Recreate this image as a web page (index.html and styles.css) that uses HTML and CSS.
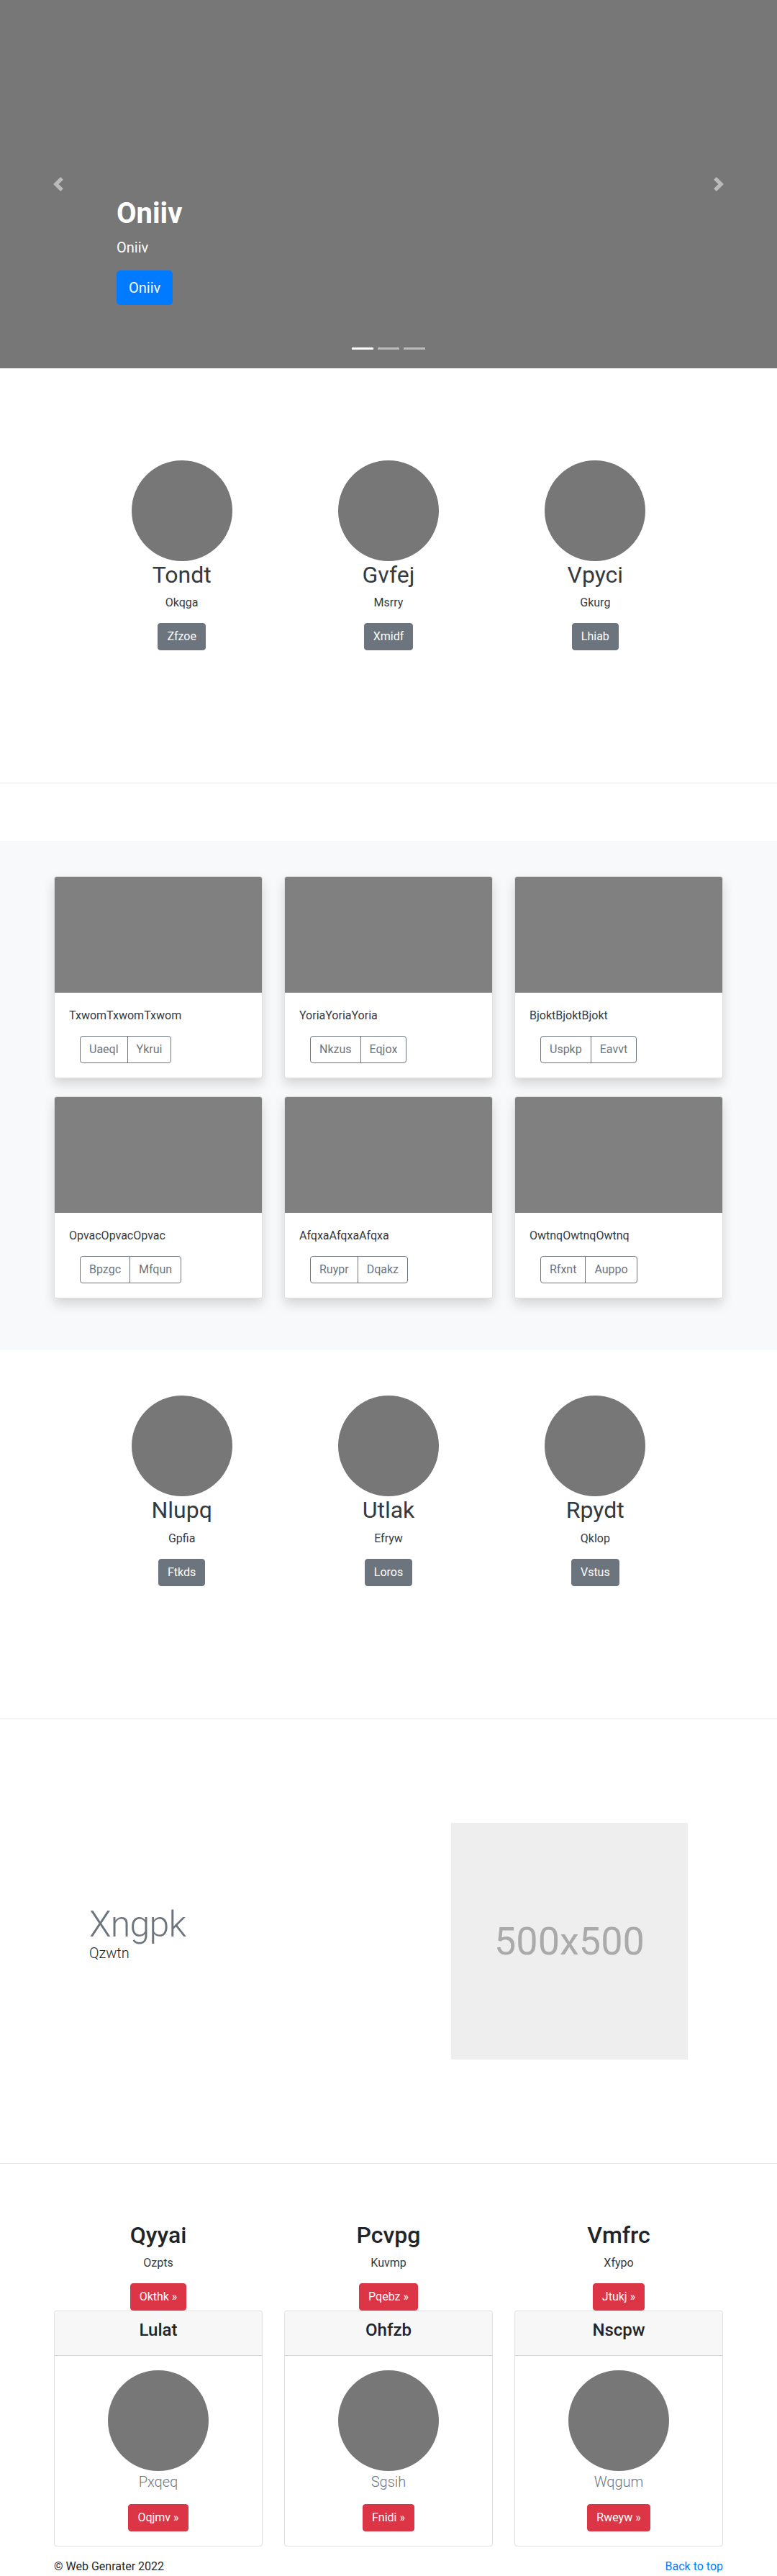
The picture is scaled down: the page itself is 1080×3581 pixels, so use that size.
FILE: index.html
```html
<!DOCTYPE html>
<html lang="en">
<head>
<meta charset="utf-8">
<title>Web Genrater</title>
<link rel="stylesheet" href="styles.css">
</head>
<body>
<div class="carousel">
  <ol class="indicators">
    <li class="active"></li>
    <li></li>
    <li></li>
  </ol>
  <div class="caption">
    <h1>Oniiv</h1>
    <p>Oniiv</p>
    <a class="btn btn-lg btn-primary" href="#">Oniiv</a>
  </div>
  <a class="ctrl prev" href="#"><svg viewBox="0 0 8 8" width="20" height="20"><path fill="#fff" d="M5.25 0l-4 4 4 4 1.5-1.5L4.25 4l2.5-2.5L5.25 0z"/></svg></a>
  <a class="ctrl next" href="#"><svg viewBox="0 0 8 8" width="20" height="20"><path fill="#fff" d="M2.75 0l-1.5 1.5L3.75 4l-2.5 2.5L2.75 8l4-4-4-4z"/></svg></a>
</div>

<section class="marketing m-first">
  <div class="narrow three">
    <div class="feat"><div class="avatar"></div><h2 class="name">Tondt</h2><p class="sub">Okqga</p><a class="btn btn-secondary" href="#">Zfzoe</a></div>
    <div class="feat"><div class="avatar"></div><h2 class="name">Gvfej</h2><p class="sub">Msrry</p><a class="btn btn-secondary" href="#">Xmidf</a></div>
    <div class="feat"><div class="avatar"></div><h2 class="name">Vpyci</h2><p class="sub">Gkurg</p><a class="btn btn-secondary" href="#">Lhiab</a></div>
  </div>
</section>
<hr class="divider">

<section class="album">
  <div class="wide cards">
    <div class="card shadowed"><div class="thumb"></div><div class="card-body"><p class="card-text">TxwomTxwomTxwom</p><div class="btn-group"><a class="btn btn-outline" href="#">Uaeql</a><a class="btn btn-outline" href="#">Ykrui</a></div></div></div>
    <div class="card shadowed"><div class="thumb"></div><div class="card-body"><p class="card-text">YoriaYoriaYoria</p><div class="btn-group"><a class="btn btn-outline" href="#">Nkzus</a><a class="btn btn-outline" href="#">Eqjox</a></div></div></div>
    <div class="card shadowed"><div class="thumb"></div><div class="card-body"><p class="card-text">BjoktBjoktBjokt</p><div class="btn-group"><a class="btn btn-outline" href="#">Uspkp</a><a class="btn btn-outline" href="#">Eavvt</a></div></div></div>
    <div class="card shadowed"><div class="thumb"></div><div class="card-body"><p class="card-text">OpvacOpvacOpvac</p><div class="btn-group"><a class="btn btn-outline" href="#">Bpzgc</a><a class="btn btn-outline" href="#">Mfqun</a></div></div></div>
    <div class="card shadowed"><div class="thumb"></div><div class="card-body"><p class="card-text">AfqxaAfqxaAfqxa</p><div class="btn-group"><a class="btn btn-outline" href="#">Ruypr</a><a class="btn btn-outline" href="#">Dqakz</a></div></div></div>
    <div class="card shadowed"><div class="thumb"></div><div class="card-body"><p class="card-text">OwtnqOwtnqOwtnq</p><div class="btn-group"><a class="btn btn-outline" href="#">Rfxnt</a><a class="btn btn-outline" href="#">Auppo</a></div></div></div>
  </div>
</section>

<section class="marketing m-second">
  <div class="narrow three">
    <div class="feat"><div class="avatar"></div><h2 class="name">Nlupq</h2><p class="sub">Gpfia</p><a class="btn btn-secondary" href="#">Ftkds</a></div>
    <div class="feat"><div class="avatar"></div><h2 class="name">Utlak</h2><p class="sub">Efryw</p><a class="btn btn-secondary" href="#">Loros</a></div>
    <div class="feat"><div class="avatar"></div><h2 class="name">Rpydt</h2><p class="sub">Qklop</p><a class="btn btn-secondary" href="#">Vstus</a></div>
  </div>
</section>
<hr class="divider">

<section class="featurette">
  <div class="narrow feat-row">
    <div class="feat-text">
      <h2 class="feat-heading">Xngpk</h2>
      <p class="lead">Qzwtn</p>
    </div>
    <div class="feat-media">
      <div class="placeholder">500x500</div>
    </div>
  </div>
</section>
<hr class="divider">

<section class="pricing">
  <div class="wide three-wide">
    <div class="price-col">
      <h2 class="p-title">Qyyai</h2>
      <p class="sub">Ozpts</p>
      <a class="btn btn-danger" href="#">Okthk &raquo;</a>
      <div class="card plain">
        <div class="card-header"><h4>Lulat</h4></div>
        <div class="card-body center">
          <div class="avatar"></div>
          <p class="muted-lead">Pxqeq</p>
          <a class="btn btn-danger" href="#">Oqjmv &raquo;</a>
        </div>
      </div>
    </div>
    <div class="price-col">
      <h2 class="p-title">Pcvpg</h2>
      <p class="sub">Kuvmp</p>
      <a class="btn btn-danger" href="#">Pqebz &raquo;</a>
      <div class="card plain">
        <div class="card-header"><h4>Ohfzb</h4></div>
        <div class="card-body center">
          <div class="avatar"></div>
          <p class="muted-lead">Sgsih</p>
          <a class="btn btn-danger" href="#">Fnidi &raquo;</a>
        </div>
      </div>
    </div>
    <div class="price-col">
      <h2 class="p-title">Vmfrc</h2>
      <p class="sub">Xfypo</p>
      <a class="btn btn-danger" href="#">Jtukj &raquo;</a>
      <div class="card plain">
        <div class="card-header"><h4>Nscpw</h4></div>
        <div class="card-body center">
          <div class="avatar"></div>
          <p class="muted-lead">Wqgum</p>
          <a class="btn btn-danger" href="#">Rweyw &raquo;</a>
        </div>
      </div>
    </div>
  </div>
</section>

<footer class="wide footer">
  <p>&copy; Web Genrater 2022</p>
  <a href="#">Back to top</a>
</footer>
</body>
</html>
```
FILE: styles.css
```css
* { box-sizing: border-box; }

body {
  margin: 0;
  font-family: "Segoe UI", Roboto, "Helvetica Neue", Arial, sans-serif;
  font-size: 16px;
  line-height: 1.5;
  color: #212529;
  background: #fff;
}

a { text-decoration: none; }

/* ---------- carousel ---------- */
.carousel {
  position: relative;
  height: 512px;
  background: #777;
}

.indicators {
  position: absolute;
  left: 0;
  right: 0;
  bottom: 16px;
  margin: 0;
  padding: 0;
  list-style: none;
  display: flex;
  justify-content: center;
  gap: 6px;
}

.indicators li {
  width: 30px;
  height: 3px;
  margin: 10px 0;
  background: rgba(255, 255, 255, .5);
}

.indicators li.active { background: #fff; }

.caption {
  position: absolute;
  left: 162px;
  top: 273px;
  color: #fff;
}

.caption h1 {
  margin: 0 0 8px;
  font-size: 40px;
  line-height: 48px;
  font-weight: 700;
}

.caption p {
  margin: 0 0 17px;
  font-size: 20px;
  line-height: 30px;
}

.ctrl {
  position: absolute;
  top: 0;
  bottom: 0;
  width: 162px;
  display: flex;
  align-items: center;
  justify-content: center;
  opacity: .5;
}

.ctrl.prev { left: 0; }
.ctrl.next { right: 0; }

/* ---------- buttons ---------- */
.btn {
  display: inline-block;
  padding: 6px 12px;
  font-size: 16px;
  line-height: 24px;
  border: 1px solid transparent;
  border-radius: 4px;
  text-align: center;
  white-space: nowrap;
}

.btn-lg {
  padding: 8px 16px;
  font-size: 20px;
  line-height: 30px;
  border-radius: 5px;
}

.btn-primary { background: #007bff; border-color: #007bff; color: #fff; }
.btn-secondary { background: #6c757d; border-color: #6c757d; color: #fff; }
.btn-danger { background: #dc3545; border-color: #dc3545; color: #fff; }

.btn-outline {
  color: #6c757d;
  border-color: #6c757d;
  background: transparent;
}

.btn-group {
  display: inline-flex;
  margin-left: 15px;
}

.btn-group .btn:first-child { border-top-right-radius: 0; border-bottom-right-radius: 0; }
.btn-group .btn:last-child { border-top-left-radius: 0; border-bottom-left-radius: 0; margin-left: -1px; }

/* ---------- containers ---------- */
.narrow {
  width: 862px;
  margin: 0 auto;
}

.wide {
  width: 960px;
  margin: 0 auto;
  padding: 0 15px;
}

.three {
  display: grid;
  grid-template-columns: repeat(3, 1fr);
}

/* ---------- marketing ---------- */
.marketing.m-first { padding: 128px 0 184px; }
.marketing.m-second { padding: 63px 0 184px; }

.feat {
  display: flex;
  flex-direction: column;
  align-items: center;
  text-align: center;
}

.avatar {
  width: 140px;
  height: 140px;
  border-radius: 50%;
  background: #777;
}

.name {
  margin: 0 0 8px;
  font-size: 32px;
  line-height: 38.4px;
  font-weight: 400;
  color: #343a40;
}

.sub { margin: 0 0 16px; color: #343a40; }

.divider {
  margin: 0 0 80px;
  border: 0;
  border-top: 1px solid rgba(0, 0, 0, .1);
  height: 0;
}

/* ---------- album ---------- */
.album {
  background: #f8f9fa;
  padding: 49px 0 72px;
}

.cards {
  display: grid;
  grid-template-columns: repeat(3, 1fr);
  column-gap: 30px;
  row-gap: 25px;
}

.card {
  background: #fff;
  border: 1px solid rgba(0, 0, 0, .125);
  border-radius: 4px;
  overflow: hidden;
}

.card.shadowed {
  box-shadow: 0 8px 16px rgba(0, 0, 0, .15);
}

.thumb {
  height: 161px;
  background: #808080;
}

.card-body { padding: 20px; }

.card-text { margin: 0 0 16px; color: #343a40; }

/* ---------- featurette ---------- */
.featurette { padding: 64px 0 144px; }

.feat-row {
  display: grid;
  grid-template-columns: 7fr 5fr;
  align-items: center;
}

.feat-text { padding: 0 15px; }
.feat-media { padding: 0 15px; }

.feat-heading {
  margin: 0;
  font-size: 50px;
  line-height: 1;
  font-weight: 300;
  letter-spacing: -0.8px;
  color: #6c757d;
}

.lead {
  margin: 0 0 16px;
  font-size: 20px;
  line-height: 30px;
  font-weight: 300;
}

.placeholder {
  height: 329px;
  background: #eee;
  color: #aaa;
  font-size: 54px;
  display: flex;
  align-items: center;
  justify-content: center;
}

/* ---------- pricing ---------- */
.three-wide {
  display: grid;
  grid-template-columns: repeat(3, 1fr);
  column-gap: 30px;
}

.price-col {
  display: flex;
  flex-direction: column;
  align-items: center;
  text-align: center;
}

.price-col > .card { align-self: stretch; }

.p-title {
  margin: 0 0 8px;
  font-size: 32px;
  line-height: 38.4px;
  font-weight: 500;
}

.card-header {
  background: #f7f7f7;
  border-bottom: 1px solid rgba(0, 0, 0, .125);
  padding: 12px 20px;
}

.card-header h4 {
  margin: 0 0 8px;
  font-size: 24px;
  line-height: 28.8px;
  font-weight: 500;
}

.card-body.center {
  display: flex;
  flex-direction: column;
  align-items: center;
}

.muted-lead {
  margin: 0 0 16px;
  font-size: 20px;
  line-height: 30px;
  font-weight: 300;
  color: #6c757d;
}

/* ---------- footer ---------- */
.footer {
  margin-top: 16px;
  display: flex;
  justify-content: space-between;
  align-items: baseline;
}

.footer p { margin: 0; }
.footer a { color: #007bff; }
```
